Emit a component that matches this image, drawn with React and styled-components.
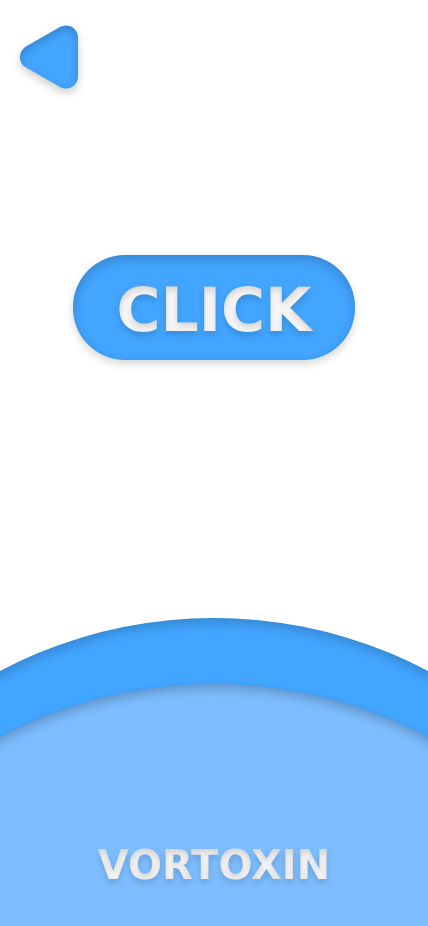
import React from "react";
import styled, { createGlobalStyle } from "styled-components";

const blue = "#42a5ff";
const paleBlue = "#7dbdff";

const GlobalStyle = createGlobalStyle`
  *, *::before, *::after {
    box-sizing: border-box;
  }
  body {
    margin: 0;
    background: #ffffff;
    font-family: "DejaVu Sans", sans-serif;
  }
`;

const Page = styled.div`
  display: flex;
  flex-direction: column;
  min-height: 100vh;
  overflow: hidden;
`;

const Header = styled.header`
  display: flex;
  padding: 16px 12px 0;
`;

const BackButton = styled.button`
  display: flex;
  padding: 0;
  border: 0;
  background: none;
  cursor: pointer;
`;

const ArrowIcon = styled.svg`
  display: block;
  overflow: visible;
  filter: url(#raised);
`;

const Main = styled.main`
  display: flex;
  flex: 1;
  flex-direction: column;
  align-items: center;
  padding: 155px 0 32px;
`;

const ClickButton = styled.button`
  width: 66%;
  height: 105px;
  padding: 4px 0 0;
  border: 0;
  border-radius: 52px;
  background: ${blue};
  box-shadow:
    0 4px 8px rgba(0, 0, 0, 0.16),
    inset 0 4px 12px rgba(0, 0, 0, 0.2);
  font-family: inherit;
  cursor: pointer;
`;

const ClickLabel = styled.span`
  display: block;
  color: #f7f7f7;
  font-size: 60px;
  font-weight: 700;
  line-height: 64px;
  filter: url(#raised-text);
`;

const Footer = styled.footer`
  display: flex;
  justify-content: center;
  height: 308px;
  overflow: hidden;
`;

const Dome = styled.div`
  flex: none;
  width: 214vw;
  height: 214vw;
  padding-top: 66px;
  border-radius: 50%;
  background: ${blue};
  box-shadow: inset 0 4px 12px rgba(0, 0, 0, 0.2);
`;

const InnerDome = styled.div`
  height: 214vw;
  padding-top: 157px;
  border-radius: 50%;
  background: ${paleBlue};
  box-shadow:
    0 0 4px rgba(0, 0, 0, 0.08),
    inset 0 4px 12px rgba(0, 0, 0, 0.24);
`;

const Brand = styled.h1`
  margin: 0;
  color: #f5f5f5;
  font-size: 40px;
  font-weight: 700;
  line-height: 48px;
  text-align: center;
  filter: url(#raised-text);
`;

const FilterDefs = styled.svg`
  display: block;
  width: 0;
  height: 0;
`;

function RaisedFilter({ id, blur, shade }) {
  return (
    <filter id={id} x="-20%" y="-20%" width="140%" height="150%" colorInterpolationFilters="sRGB">
      <feDropShadow in="SourceGraphic" dx="0" dy="4" stdDeviation={blur} floodOpacity={shade} result="dropped" />
      <feOffset in="SourceAlpha" dx="0" dy="4" />
      <feGaussianBlur stdDeviation={blur} result="blurred" />
      <feComposite in="SourceAlpha" in2="blurred" operator="out" result="rim" />
      <feComponentTransfer in="rim" result="shade">
        <feFuncA type="linear" slope={shade} />
      </feComponentTransfer>
      <feMerge>
        <feMergeNode in="dropped" />
        <feMergeNode in="shade" />
      </feMerge>
    </filter>
  );
}

function BackArrow() {
  return (
    <ArrowIcon width="76" height="84" viewBox="0 0 76 84" aria-hidden="true">
      <path
        d="M20 41 54 21.5V60.5Z"
        fill={blue}
        stroke={blue}
        strokeWidth="24"
        strokeLinejoin="round"
      />
    </ArrowIcon>
  );
}

export default function App() {
  return (
    <>
      <GlobalStyle />
      <FilterDefs aria-hidden="true">
        <RaisedFilter id="raised" blur={4} shade={0.2} />
        <RaisedFilter id="raised-text" blur={3} shade={0.14} />
      </FilterDefs>
      <Page>
        <Header>
          <BackButton type="button" aria-label="Back">
            <BackArrow />
          </BackButton>
        </Header>
        <Main>
          <ClickButton type="button">
            <ClickLabel>CLICK</ClickLabel>
          </ClickButton>
        </Main>
        <Footer>
          <Dome>
            <InnerDome>
              <Brand>VORTOXIN</Brand>
            </InnerDome>
          </Dome>
        </Footer>
      </Page>
    </>
  );
}
